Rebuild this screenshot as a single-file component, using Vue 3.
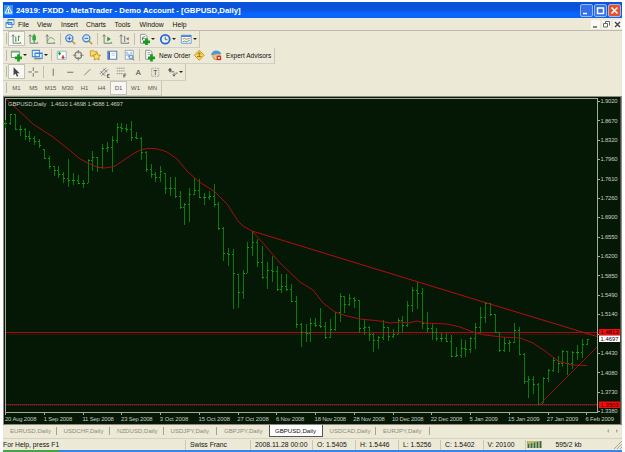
<template>
  <div class="window">
    <header class="title">
      <svg class="logo" viewBox="0 0 9 10"><rect width="9" height="10" fill="#3f97e4" /><path d="M4.5 1.5L1 8h7z M4.5 4v4" fill="none" stroke="#fff" /></svg>
      <span class="caption">24919: FXDD - MetaTrader - Demo Account - [GBPUSD,Daily]</span>
      <div class="controls">
        <svg v-for="b in controls" :key="b.d" viewBox="0 0 13 13"><rect x=".5" y=".5" width="12" height="12" rx="1.5" :fill="b.fill" stroke="#b9cdf6" stroke-width=".8" /><path :d="b.d" fill="none" stroke="#fff" stroke-width="1.5" /></svg>
      </div>
    </header>

    <nav class="menu">
      <svg class="doc" viewBox="0 0 10 10"><path d="M3 .5h6v5H3z M1 3.5h6v5H1z" fill="#fff" stroke="#4c8fd8" /><path d="M1 4h6M3 1h6" stroke="#2f74c8" /></svg>
      <span v-for="m in menus" :key="m.label" :style="{ width: m.w + 'px' }">{{ m.label }}</span>
      <div class="mdi">
        <svg viewBox="0 0 9 9"><path d="M2 7h4" stroke="#555" stroke-width="1.4" /></svg>
        <svg viewBox="0 0 9 9"><path d="M3.5 1.5h4v4M1.5 3.5h4v3.5h-4z M3.5 1.5v2" fill="none" stroke="#666" /></svg>
        <svg viewBox="0 0 9 9"><path d="M2 2l5 5M7 2l-5 5" stroke="#444" stroke-width="1.4" /></svg>
      </div>
    </nav>

    <div class="bars">
      <div v-for="(row, r) in toolbars" :key="r" class="toolbar">
        <i class="grip"></i>
        <template v-for="(t, k) in row" :key="k">
          <i v-if="t === '|'" class="sep"></i>
          <span v-else-if="t.text" class="label" :style="{ width: t.w + 'px' }">{{ t.text }}</span>
          <span v-else class="tool" :class="{ pressed: t.on, drop: t.drop }">
            <svg viewBox="0 0 14 14" v-html="icons[t.icon]"></svg>
            <b v-if="t.drop" class="arrow"></b>
          </span>
        </template>
      </div>
      <div class="toolbar frames">
        <i class="grip"></i>
        <span v-for="f in frames" :key="f" :class="{ pressed: f === 'D1' }">{{ f }}</span>
      </div>
    </div>

    <svg class="chart" viewBox="3 96 619 329">
      <rect x="3" y="96" width="619" height="329" fill="#8c8b80" />
      <rect x="4" y="97" width="616.5" height="327" fill="#051705" />
      <g shape-rendering="crispEdges">
        <path d="M5.5 412.5V98.5H597.5V412.5" fill="none" stroke="#a5aa9d" />
        <path d="M5 412.5H598" stroke="#a5aa9d" />
        <path v-for="(p, i) in prices" :key="p" :d="`M597 ${Math.round(101 + i * 19.38)}.5h3`" stroke="#a5aa9d" />
        <path v-for="(d, i) in dates" :key="d" :d="`M${Math.round(5 + i * 38.75)}.5 412v3`" stroke="#a5aa9d" />
        <path d="M6 334.5H597" stroke="#3d1c1c" stroke-dasharray="1 1" />
        <path d="M6 332.5H597" stroke="#b20808" />
        <path d="M6 404.5H597" stroke="#7c1822" />
        <path d="M6 405.5H597" stroke="#4d2226" stroke-dasharray="1 1" />
        <path :d="barPath" fill="none" stroke="#0a7a0a" />
        <path :d="tickPath" fill="none" stroke="#0aa00a" />
      </g>
      <polyline :points="average" fill="none" stroke="#b00d12" stroke-width=".95" />
      <path d="M252 231L490 304L597 336.5" fill="none" stroke="#c00d12" stroke-width=".95" />
      <path d="M539 405L597 347" stroke="#941822" stroke-width=".9" />
      <text x="8" y="105.6" textLength="38.5">GBPUSD,Daily</text>
      <text x="50.5" y="105.6" textLength="72.5">1.4610 1.4698 1.4588 1.4697</text>
      <text v-for="(p, i) in prices" :key="p" x="600.5" :y="103.2 + i * 19.38" textLength="17">{{ i === 12 ? '' : p }}</text>
      <g v-for="m in marks" :key="m.v">
        <rect x="599" :y="m.y" width="21" height="6.5" :fill="m.fill" />
        <text class="dark" x="600.5" :y="m.y + 5.4" textLength="18">{{ m.v }}</text>
      </g>
      <text v-for="(d, i) in dates" :key="d" :x="5 + i * 38.7" y="420.5" :textLength="d.length > 10 ? 31.5 : 28.5">{{ d }}</text>
    </svg>

    <div class="tabs">
      <span v-for="t in tabs" :key="t" :class="{ active: t === 'GBPUSD,Daily', before: t === 'GBPJPY,Daily' }">{{ t }}</span>
      <div class="scroll"><b></b><b></b></div>
    </div>

    <footer class="status">
      <span v-for="s in status" :key="s.t" :style="{ width: s.w + 'px' }">{{ s.t }}</span>
      <svg class="signal" viewBox="0 0 16 9"><path d="M1.5 1v7M4.5 1v7M7.5 1v7M10.5 1v7M13.5 1v7" stroke="#3c6a35" stroke-width="2" /><path d="M1 1v3l13-3z" fill="#b9bd68" /></svg>
      <span class="kb">595/2 kb</span>
      <svg class="resize" viewBox="0 0 9 9"><path d="M1 9L9 1M4 9L9 4M7 9L9 7" stroke="#a8a698" /></svg>
    </footer>
    <div class="taskbar"><i></i></div>
  </div>
</template>

<script setup>
const controls = [
  { fill: '#3470e8', d: 'M3 9.5h4' },
  { fill: '#3470e8', d: 'M3.5 4h6v5.5h-6z' },
  { fill: '#e0532b', d: 'M3.5 3.5l6 6M9.5 3.5l-6 6' },
]

const menus = [
  { label: 'File', w: 19 },
  { label: 'View', w: 24 },
  { label: 'Insert', w: 25 },
  { label: 'Charts', w: 28.5 },
  { label: 'Tools', w: 25 },
  { label: 'Window', w: 33 },
  { label: 'Help', w: 20 },
]

const plus = '<path d="M9.5 6v8M5.500 10h8" stroke="#169c1c" stroke-width="3"/>'
const axes = '<path d="M3.5 2v9.5H12M2 4l1.5-2L5 4M11 10l1.5 1.5" fill="none" stroke="#6a7a72"/>'
const lens = '<path d="M8.5 8.5l4 4" stroke="#c9a040" stroke-width="2"/><circle cx="6" cy="6" r="4" fill="#cfe6fb" stroke="#3a78cc" stroke-width="1.3"/>'
const page = '<path d="M3 1.5h5l2 2v8H3z" fill="#fff" stroke="#8a8a8a"/>'
const icons = {
  bar: axes + '<path d="M6.5 4v6M9.5 3v6M6 8h1M9 4h2" stroke="#18963a"/>',
  candle: axes + '<path d="M8 1v10" stroke="#187c2a"/><rect x="6" y="2.5" width="4" height="6" rx="1.5" fill="#25a83c"/>',
  line: axes + '<path d="M4 9c2-5 4-5 8-1" fill="none" stroke="#48a050"/>',
  zoomin: lens + '<path d="M4 6h4M6 4v4" stroke="#2866c0"/>',
  zoomout: lens + '<path d="M4 6h4" stroke="#2866c0"/>',
  scroll: axes + '<path d="M7 4l4 2.8L7 9.500z" fill="#28993a"/>',
  shift: axes + '<path d="M7.500 3v7" stroke="#3970b8"/><path d="M12 4.500L9 6.500l3 2z" fill="#bf5a30"/>',
  indicator: page + '<path d="M5 8c0-4 1-4 3-4M4.500 6h3" fill="none" stroke="#666"/>' + plus,
  clock: '<circle cx="7" cy="7" r="5" fill="#e7f3ff" stroke="#2a68cc" stroke-width="2"/><path d="M7 4v3.500h2.500" fill="none" stroke="#555"/>',
  template: '<path d="M1.500 2.500h11v9h-11z" fill="#fff" stroke="#5596d8"/><path d="M1.500 3.500h11" stroke="#4088d8" stroke-width="2"/><path d="M3 7l2-1 2 1 4-1" fill="none" stroke="#cc6040"/><path d="M3 10l2-1 2 1 4-2" fill="none" stroke="#38a048"/>',
  newchart: '<path d="M1.500 2.500h9v7h-9z" fill="#fff" stroke="#5c8c6c"/><path d="M1.500 3.500h9" stroke="#55a060"/>' + plus,
  profiles: '<path d="M1.500 1.500h8v7h-8z M4.500 4.500h8v6h-8z" fill="#e5f1fd" stroke="#4a8ad8" stroke-width="1.200"/><path d="M4.500 5h8" stroke="#3377cc"/><path d="M3 12h8" stroke="#e0b850"/>',
  market: '<path d="M2.500 2.500h10v9h-10z" fill="#fff" stroke="#88b0d0"/><path d="M5 7V4M3.800 5.500L5 4l1.500 1.500" fill="none" stroke="#24a036" stroke-width="1.500"/><path d="M9 7v3.500M7.500 9L9 10.500 10.500 9" fill="none" stroke="#cf3b2a" stroke-width="1.500"/>',
  target: '<circle cx="7" cy="7" r="3.700" fill="none" stroke="#808080" stroke-width="1.400"/><path d="M7 1v4M7 9v4M1 7h4M9 7h4" stroke="#808080" stroke-width="1.300"/>',
  star: '<path d="M1.500 2h4l1 1H9v5H1.500z" fill="#f8d870" stroke="#c79a32"/><path d="M8.500 4l1.400 2.700 3 .3-2 2.200.4 3-2.800-1.300-2.700 1.300.4-3-2-2.200 2.900-.3z" fill="#ffe260" stroke="#bf8d20"/>',
  terminal: '<path d="M2 2.500h10v9H2z" fill="#fff" stroke="#5a80b8" stroke-width="1.200"/><path d="M3.500 3v8.500" stroke="#386cc0" stroke-width="2"/><path d="M6 5h4M6 7h4" stroke="#bccde0"/>',
  tester: '<path d="M2.500 1.500h9v10h-9z" fill="#fff" stroke="#86a4c8"/><path d="M4.500 3v5M6.500 5v4M9 3v3" stroke="#718fb0"/><circle cx="9" cy="9" r="2.200" fill="#d7eafa" stroke="#4177bb"/><path d="M10.500 10.500l2 2" stroke="#bc9241" stroke-width="1.500"/>',
  order: page + '<path d="M5 4h3M5 6h3" stroke="#999"/>' + plus,
  meta: '<path d="M7 1.500L12.500 7 7 12.500 1.500 7z" fill="#f8d759" stroke="#bd8d20"/><path d="M7 4v5M5 6l2-2 2 2M4.500 8.500h5" fill="none" stroke="#947018"/>',
  expert: '<circle cx="7" cy="8" r="4" fill="#eac27a" stroke="#bf9550"/><path d="M1 7c1-7 10-7 12-1-4-1-7 0-12 1z" fill="#4c98dc"/><path d="M7.500 7.500h5v5h-5z" fill="#d82e20"/><path d="M9 9h2v2H9z" fill="#fff"/>',
  cursor: '<path d="M4 1.500v9l2.200-2 1.600 3.500 1.500-.7-1.500-3.300h3z" fill="#444"/>',
  cross: '<path d="M7 1.500v4M7 8v4M1.500 6.700h4M8.500 6.700h4" stroke="#666"/>',
  vline: '<path d="M7 3v8" stroke="#666"/>',
  hline: '<path d="M3.500 7h7" stroke="#666"/>',
  trend: '<path d="M3.500 10.500l7-7" stroke="#777"/>',
  channel: '<path d="M2 9l7-7M4 11l7-7M3 6l5 5M6 3l4 4" stroke="#777"/><path d="M13 9.500h-2.500v3.500H13M10.500 11H12" fill="none" stroke="#555"/>',
  fibo: '<path d="M2 2.500h9M2 5.500h9M2 8.500h7" stroke="#888" stroke-dasharray="1.500 .6"/><path d="M12.500 9h-2.500v4M10 11h2" fill="none" stroke="#555"/>',
  letter: '<text x="7" y="10" text-anchor="middle" font-size="8.500" font-family="Liberation Sans, sans-serif" fill="#444">A</text>',
  box: '<rect x="3" y="2.500" width="8" height="9" fill="none" stroke="#888" stroke-dasharray="1 1"/><text x="7" y="9.800" text-anchor="middle" font-size="7.500" font-family="Liberation Sans, sans-serif" fill="#333">T</text>',
  arrows: '<path d="M4.500 2L2 5h1.700v2h1.700V5H7z" fill="#555"/><path d="M6 6.500h3M9 8v3M7.500 9.500l1.500 2 1.500-2M10.500 8h2.500" fill="none" stroke="#555"/>',
}

const toolbars = [
  [
    { icon: 'bar', on: true }, { icon: 'candle' }, { icon: 'line' }, '|',
    { icon: 'zoomin' }, { icon: 'zoomout' }, '|',
    { icon: 'scroll' }, { icon: 'shift' }, '|',
    { icon: 'indicator', drop: true }, { icon: 'clock', drop: true }, { icon: 'template', drop: true },
  ],
  [
    { icon: 'newchart', drop: true }, { icon: 'profiles', drop: true }, '|',
    { icon: 'market' }, { icon: 'target' }, { icon: 'star' }, { icon: 'terminal' }, { icon: 'tester' }, '|',
    { icon: 'order' }, { text: 'New Order', w: 33 }, { icon: 'meta' }, { icon: 'expert' }, { text: 'Expert Advisors', w: 49 },
  ],
  [
    { icon: 'cursor', on: true }, { icon: 'cross' }, '|',
    { icon: 'vline' }, { icon: 'hline' }, { icon: 'trend' }, { icon: 'channel' }, { icon: 'fibo' },
    { icon: 'letter' }, { icon: 'box' }, { icon: 'arrows', drop: true },
  ],
]
const frames = ['M1', 'M5', 'M15', 'M30', 'H1', 'H4', 'D1', 'W1', 'MN']

const prices = ['1.9020', '1.8670', '1.8320', '1.7960', '1.7610', '1.7260', '1.6900', '1.6550', '1.6200', '1.5850', '1.5490', '1.5140', '1.4790', '1.4430', '1.4080', '1.3730', '1.3380']
const dates = ['20 Aug 2008', '1 Sep 2008', '11 Sep 2008', '23 Sep 2008', '3 Oct 2008', '15 Oct 2008', '27 Oct 2008', '6 Nov 2008', '18 Nov 2008', '28 Nov 2008', '10 Dec 2008', '22 Dec 2008', '5 Jan 2009', '15 Jan 2009', '27 Jan 2009', '6 Feb 2009']
const marks = [
  { v: '1.4813', y: 329, fill: '#fb0a0a' },
  { v: '1.4697', y: 335.5, fill: '#fff' },
  { v: '1.3503', y: 401.5, fill: '#fb0a0a' },
]

// high, low, close of every daily bar, in chart pixels
const bars = [
  [120, 128, 123], [114, 125, 114], [114, 130, 129], [125, 136, 129], [128, 140, 136], [131, 142, 138], [136, 145, 141], [139, 148, 145],
  [149, 159, 158], [156, 169, 166], [166, 176, 170], [166, 178, 174], [172, 183, 178], [159, 187, 180], [173, 185, 180], [175, 184, 183],
  [180, 188, 183], [159, 183, 160], [151, 171, 157], [157, 172, 167], [144, 169, 148], [142, 152, 147], [136, 172, 140], [123, 143, 127],
  [123, 132, 128], [124, 132, 129], [121, 141, 137], [132, 139, 138], [137, 160, 152], [151, 172, 169], [164, 178, 174], [172, 182, 177],
  [166, 182, 171], [173, 194, 188], [177, 196, 188], [177, 198, 196], [191, 209, 207], [203, 225, 204], [188, 222, 194], [178, 195, 190],
  [179, 198, 197], [193, 205, 197], [191, 200, 196], [184, 207, 204], [202, 230, 228], [227, 261, 253], [248, 266, 254], [249, 309, 273],
  [274, 308, 292], [270, 299, 273], [242, 273, 247], [232, 256, 242], [239, 267, 262], [246, 279, 277], [262, 289, 270], [256, 282, 271],
  [266, 291, 289], [274, 293, 286], [274, 291, 289], [284, 302, 301], [296, 328, 324], [323, 347, 332], [324, 342, 333], [318, 342, 323],
  [318, 327, 325], [308, 328, 326], [322, 339, 337], [319, 338, 329], [313, 331, 312], [293, 322, 296], [296, 313, 304], [294, 306, 298],
  [297, 308, 300], [300, 333, 328], [319, 335, 327], [326, 341, 334], [333, 352, 340], [336, 349, 337], [320, 340, 327], [327, 341, 336],
  [329, 338, 334], [318, 334, 320], [316, 333, 325], [301, 327, 305], [287, 312, 290], [282, 309, 293], [288, 329, 323], [312, 333, 328],
  [323, 340, 332], [328, 341, 338], [333, 342, 338], [333, 342, 341], [335, 357, 356], [347, 357, 355], [339, 358, 348], [340, 357, 349],
  [337, 353, 338], [323, 349, 327], [307, 333, 317], [302, 323, 303], [303, 316, 314], [314, 333, 332], [332, 352, 350], [337, 352, 343],
  [340, 352, 342], [323, 343, 330], [327, 354, 354], [353, 384, 381], [376, 398, 379], [376, 394, 384], [383, 405, 404], [377, 403, 378],
  [369, 382, 370], [357, 372, 360], [356, 373, 363], [350, 367, 351], [351, 375, 363], [351, 369, 352], [345, 360, 352], [339, 358, 344],
  [339, 345, 339],
]
const barX = (i) => Math.round(5.2 + i * 4.845) + 0.5
const barPath = bars.map((b, i) => `M${barX(i)} ${b[0]}V${b[1]}`).join('')
// open sits on the left at the previous close, close on the right
const tickPath = bars
  .map((b, i) => {
    const open = i ? Math.min(Math.max(bars[i - 1][2], b[0]), b[1]) : b[2]
    return `M${barX(i) - 1.5} ${open + 0.5}h1M${barX(i) - 0.5} ${b[2] + 0.5}h2`
  })
  .join('')

const average = '6,99 17,109 33,124 53,137 67,148 80,159 90,164 97,167 105,168 111,167 115,166 133,154 140,150 147,148.500 155,148.500 161,150 167,152 177,159 187,171 198,181 215,192 227,204 238,221 243,226 252,231 263,243 280,263 300,282 313,290 323,303 335,312 347,316 360,319 380,321 390,323 400,322 408,323 417,321 425,323 447,324 460,327 473,332 485,335 502,337 520,338 533,343 545,351 558,361 572,365 587,365.500'

const tabs = ['EURUSD,Daily', 'USDCHF,Daily', 'NZDUSD,Daily', 'USDJPY,Daily', 'GBPJPY,Daily', 'GBPUSD,Daily', 'USDCAD,Daily', 'EURJPY,Daily']
const status = [
  { t: 'For Help, press F1', w: 183 },
  { t: 'Swiss Franc', w: 65 },
  { t: '2008.11.28 00:00', w: 62 },
  { t: 'O: 1.5405', w: 43 },
  { t: 'H: 1.5446', w: 43 },
  { t: 'L: 1.5256', w: 42 },
  { t: 'C: 1.5402', w: 42.5 },
  { t: 'V: 20100', w: 42 },
]
</script>

<style>
body {
  background: #fff;
  overflow: hidden;
}
</style>

<style scoped>
.window {
  display: flex;
  flex-direction: column;
  width: 619px;
  height: 450px;
  padding: 2px 3px 0;
  font: 6.8px "Liberation Sans", Arial, sans-serif;
  color: #111;
  white-space: nowrap;
}
svg {
  display: block;
  flex: none;
}
span {
  flex: none;
  box-sizing: border-box;
}
.title {
  display: flex;
  align-items: center;
  flex: none;
  height: 16px;
  background: linear-gradient(#0b55e0 0 1px, #0a50d4 2px, #0a56e0 8px, #0864fb 11px);
  color: #fff;
}
.logo {
  width: 9px;
  height: 10px;
  margin: 0 3px 0 1px;
}
.caption {
  font-size: 7.820px;
  font-weight: bold;
}
.controls {
  display: flex;
  gap: 1px;
  margin-left: auto;
  margin-right: 1px;
}
.controls svg {
  width: 13px;
  height: 13px;
}
.menu,
.bars,
.tabs,
.status {
  background-color: #efebd6;
  background-image: repeating-linear-gradient(90deg, rgba(225, 229, 238, .4) 0 1px, transparent 1px 2px), repeating-linear-gradient(rgba(243, 232, 180, .3) 0 1px, transparent 1px 2px);
}
.menu {
  display: flex;
  align-items: center;
  flex: none;
  height: 12px;
  border-bottom: 1px solid #bdbbaf;
}
.doc {
  width: 10px;
  height: 10px;
  margin: 0 3px 0 2px;
}
.mdi {
  display: flex;
  gap: 2px;
  margin-left: auto;
}
.mdi svg {
  width: 9px;
  height: 9px;
  background: #f9f8f2;
}
.bars {
  display: flex;
  flex-direction: column;
  align-items: flex-start;
  flex: none;
  height: 65px;
  padding-top: 0;
  box-sizing: border-box;
}
.toolbar {
  display: flex;
  align-items: center;
  flex: none;
  height: 16.500px;
  box-sizing: border-box;
  border-right: 1px solid #c9c6b8;
  border-bottom: 1px solid #d3cfc6;
}
.toolbar.frames {
  height: 15.500px;
}
.grip {
  width: 1px;
  height: 11px;
  margin: 0 1.500px;
  border-right: 1px solid #bbb8a8;
}
.sep {
  width: 1px;
  height: 12px;
  margin: 0 1px;
  background: #c3c0b3;
}
.tool {
  display: flex;
  align-items: center;
  justify-content: center;
  width: 17px;
  height: 15px;
}
.tool svg {
  width: 12.500px;
  height: 12.500px;
}
.tool.drop {
  width: 21px;
  gap: 1px;
}
.arrow {
  border: 2px solid transparent;
  border-top-color: #222;
  border-bottom: 0;
}
.pressed {
  background: #f8f7f1;
  border: 1px solid #c4c1b5;
}
.label {
  padding-left: 1px;
  font-size: 6.500px;
}
.frames span {
  width: 17px;
  height: 14px;
  line-height: 14px;
  text-align: center;
  font-size: 6px;
  color: #555;
}
.frames .pressed {
  line-height: 12px;
}
.chart {
  width: 619px;
  height: 329px;
}
.chart text {
  font: 5.900px "Liberation Sans", Arial, sans-serif;
  fill: #c6cbc2;
}
.chart .dark {
  fill: #200;
}
.tabs {
  display: flex;
  align-items: flex-start;
  flex: none;
  height: 13px;
  font-size: 6.100px;
  color: #8c897c;
}
.tabs span {
  width: 53.500px;
  margin-top: 2px;
  padding-left: 7px;
  line-height: 8px;
  border-right: 1px solid #a5a294;
}
.tabs .before {
  width: 52px;
  border-color: transparent;
}
.tabs .active {
  height: 12px;
  margin-top: 0;
  padding-left: 5px;
  line-height: 11px;
  border: 1px solid #555;
  border-top: 0;
  background: #fff;
  color: #111;
}
.scroll {
  display: flex;
  gap: 7px;
  margin: 4px 4px 0 auto;
}
.scroll b {
  border: 2px solid transparent;
  border-right-color: #aaa798;
  border-left: 0;
}
.scroll b + b {
  border-left: 2px solid #aaa798;
  border-right: 0;
}
.status {
  display: flex;
  align-items: center;
  flex: none;
  height: 12px;
  border-top: 1px solid #d5d2c5;
  box-sizing: border-box;
}
.status span {
  border-right: 1px solid #cac7ba;
  line-height: 10px;
}
.status span + span {
  padding-left: 4px;
}
.signal {
  width: 16px;
  height: 9px;
  margin-left: 1px;
}
.status .kb {
  margin-left: 13px;
  border: 0;
}
.resize {
  width: 9px;
  height: 9px;
  margin-left: auto;
}
.taskbar {
  flex: none;
  height: 2px;
  background: #3a83ea;
}
.taskbar i {
  display: block;
  width: 56px;
  height: 2px;
  background: #46a346;
}
</style>
